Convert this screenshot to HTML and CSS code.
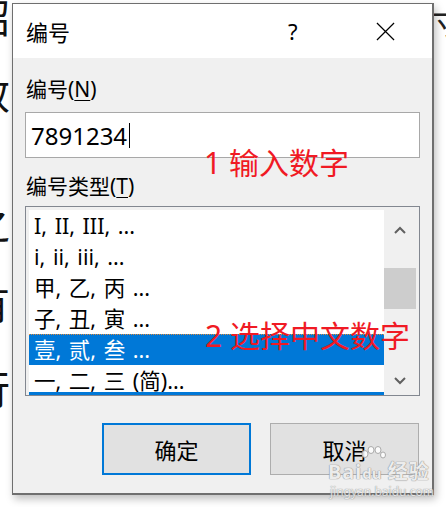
FILE: index.html
```html
<!DOCTYPE html>
<html lang="zh-CN">
<head>
    <meta charset="UTF-8">
    <meta name="viewport" content="width=device-width, initial-scale=1.0">
    <title>编号</title>
    <link rel="stylesheet" href="styles.css">
</head>
<body>
    <div class="behind">
        <div class="bg-char c1">绍</div>
        <div class="bg-char c2">效</div>
        <div class="bg-char c3">之</div>
        <div class="bg-char c4">有</div>
        <div class="bg-char c5">行</div>
    </div>
    <div class="bg-right">寸</div>

    <div class="dialog">
        <div class="titlebar">
            <span class="title">编号</span>
            <span class="help">?</span>
            <svg class="close" width="20" height="20" viewBox="0 0 20 20">
                <path d="M1 1L19 19M19 1L1 19" stroke="#000" stroke-width="1.3" fill="none"/>
            </svg>
        </div>
        <div class="content">
            <div class="label">编号(<u>N</u>)</div>
            <div class="input">7891234<span class="caret"></span></div>
            <div class="label second">编号类型(<u>T</u>)</div>
            <div class="listbox">
                <div class="items">
                    <div class="item">I, II, III, ...</div>
                    <div class="item">i, ii, iii, ...</div>
                    <div class="item">甲, 乙, 丙 ...</div>
                    <div class="item">子, 丑, 寅 ...</div>
                    <div class="item selected">壹, 贰, 叁 ...</div>
                    <div class="item">一, 二, 三 (简)...</div>
                </div>
                <div class="scrollbar">
                    <svg class="arrow" width="12" height="8" viewBox="0 0 12 8"><path d="M1 7L6 2L11 7" stroke="#606060" stroke-width="2" fill="none"/></svg>
                    <div class="thumb"></div>
                    <div class="track"></div>
                    <svg class="arrow" width="12" height="8" viewBox="0 0 12 8"><path d="M1 1L6 6L11 1" stroke="#606060" stroke-width="2" fill="none"/></svg>
                </div>
            </div>
            <div class="buttons">
                <div class="btn default">确定</div>
                <div class="btn">取消</div>
            </div>
        </div>
        <div class="note n1">1 输入数字</div>
        <div class="note n2">2 选择中文数字</div>
    </div>

    <div class="watermark">
        <svg class="paw" width="26" height="18" viewBox="0 0 26 18">
            <g fill="rgba(255,255,255,0.85)" stroke="#aaa" stroke-width="1">
                <ellipse cx="5" cy="8" rx="3" ry="3.5"/>
                <ellipse cx="11" cy="4" rx="3" ry="3.5"/>
                <ellipse cx="18" cy="4" rx="3" ry="3.5"/>
                <ellipse cx="23" cy="9" rx="2.5" ry="3"/>
            </g>
        </svg>
        <div class="wm-logo">Bai<span class="du">du</span> 经验</div>
        <div class="wm-url">jingyan.baidu.com</div>
    </div>
</body>
</html>
```
FILE: styles.css
```css
body{
    margin: 0;
    width: 446px;
    height: 507px;
    overflow: hidden;
    background-color: #fff;
    font-family: "Noto Sans", "Noto Sans CJK SC", sans-serif;
    position: relative;
}
.behind{
    position: absolute;
    left: -30px;
    top: 0;
    font-size: 40px;
    line-height: 40px;
    color: #111;
}
.bg-char.c1{margin-top: -2px;}
.bg-char.c2{margin-top: 36px;}
.bg-char.c3{margin-top: 90px;}
.bg-char.c4{margin-top: 40px;}
.bg-char.c5{margin-top: 45px;}
.bg-right{
    position: absolute;
    left: 432px;
    top: -4px;
    font-size: 34px;
    color: #222;
}

.dialog{
    position: relative;
    margin: 3px 0 0 12px;
    width: 422px;
    height: 492px;
    box-sizing: border-box;
    border: 1px solid #6f6f6f;
    border-width: 1px 2px 2px 1px;
    background-color: #f0f0f0;
    box-shadow: 2px 4px 8px rgba(0,0,0,0.25);
}
.titlebar{
    height: 54px;
    background-color: #fff;
    display: flex;
    align-items: center;
    padding-left: 13px;
}
.title{
    font-size: 22px;
    flex: 1;
}
.help{
    font-size: 22px;
    width: 18px;
    margin-right: 70px;
}
.close{
    width: 19px;
    height: 19px;
    margin-right: 37px;
}
.content{
    padding: 16px 12px 0 12px;
}
.label{
    font-size: 21px;
    line-height: 30px;
    padding-left: 1px;
    margin-bottom: 8px;
}
.label u{
    text-decoration-thickness: 1px;
    text-underline-offset: 3px;
}
.label.second{
    margin: 13px 0 5px;
}
.input{
    height: 46px;
    box-sizing: border-box;
    border: 1px solid #a8a8a8;
    background-color: #fff;
    font-size: 24px;
    padding-left: 5px;
    display: flex;
    align-items: center;
}
.caret{
    width: 1px;
    height: 25px;
    background-color: #000;
    margin-left: 2px;
}
.listbox{
    height: 190px;
    box-sizing: border-box;
    border: 1px solid #828790;
    padding: 3px 3px 0 3px;
    display: flex;
    background-color: #f0f0f0;
}
.items{
    flex: 1;
    background-color: #fff;
    overflow: hidden;
    border-bottom: 3px solid #0078d7;
}
.item{
    height: 31px;
    line-height: 31px;
    font-size: 21.5px;
    padding-left: 5px;
    white-space: nowrap;
    word-spacing: 2px;
}
.item.selected{
    background-color: #0078d7;
    color: #fff;
    border-top: 1px dotted #e08a3c;
    box-sizing: border-box;
    line-height: 30px;
}
.scrollbar{
    width: 32px;
    display: flex;
    flex-direction: column;
    align-items: center;
}
.arrow{
    margin: 16px 0 12px;
}
.scrollbar .arrow:last-child{
    margin: 12px 0 10px;
}
.thumb{
    width: 32px;
    height: 41px;
    margin-top: 22px;
    background-color: #cdcdcd;
}
.track{
    flex: 1;
}
.buttons{
    display: flex;
    justify-content: flex-end;
    gap: 19px;
    margin-top: 27px;
    padding-right: 1px;
}
.btn{
    width: 149px;
    height: 52px;
    box-sizing: border-box;
    border: 1px solid #adadad;
    background-color: #e1e1e1;
    font-size: 22px;
    display: flex;
    align-items: center;
    justify-content: center;
}
.btn.default{
    border: 2px solid #0078d7;
}
.note{
    position: absolute;
    color: #f01a24;
    font-size: 30px;
    line-height: 36px;
    white-space: nowrap;
}
.n1{
    left: 191px;
    top: 141px;
}
.n2{
    left: 192px;
    top: 314px;
}
.watermark{
    position: absolute;
    left: 328px;
    top: 446px;
    white-space: nowrap;
    color: rgba(255,255,255,0.85);
    text-shadow: 0 0 1px #888, 0 0 1px #888;
}
.paw{
    display: block;
    margin: 0 0 -3px 32px;
}
.wm-logo{
    font-size: 20px;
    font-weight: bold;
    line-height: 22px;
    letter-spacing: 1px;
}
.wm-logo .du{
    font-size: 15px;
    letter-spacing: 0;
}
.wm-url{
    font-size: 12px;
    line-height: 16px;
    padding-left: 2px;
    opacity: 0.8;
}
```
